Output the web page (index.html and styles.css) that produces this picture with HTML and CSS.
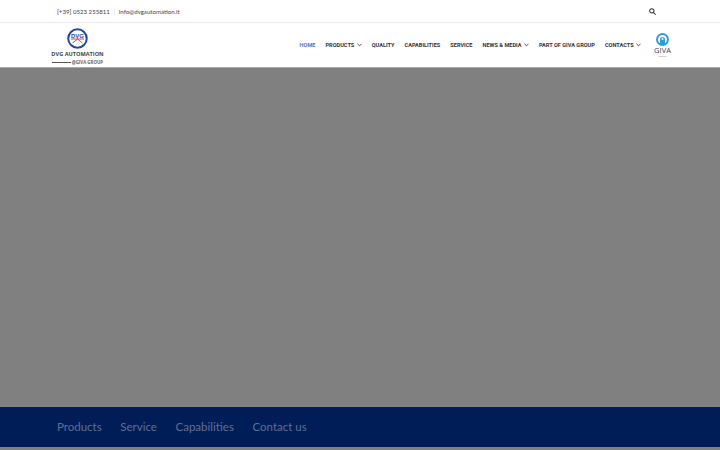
FILE: index.html
```html
<!DOCTYPE html>
<html lang="en">
<head>
    <meta charset="UTF-8">
    <meta name="viewport" content="width=device-width, initial-scale=1.0">
    <title>DVG Automation</title>
    <link rel="stylesheet" href="styles.css">
</head>
<body>

<div class="topbar">
    <div class="contacts">
        <span>[+39] 0523 255811</span>
        <span class="sep"></span>
        <span>info@dvgautomation.it</span>
    </div>
    <svg class="search" width="7" height="7" viewBox="0 0 16 16" fill="none" stroke="#333" stroke-width="2.4">
        <circle cx="6.5" cy="6.5" r="5"/>
        <path d="M10.5 10.5L15 15"/>
    </svg>
</div>

<header class="navbar">
    <div class="logo">
        <svg class="logo-mark" width="21" height="21" viewBox="0 0 42 42">
            <circle cx="21" cy="21" r="18.5" fill="#fff" stroke="#1f4a98" stroke-width="4"/>
            <path d="M8 22H34" stroke="#d8454a" stroke-width="2"/>
            <path d="M21 22L11 30M21 22L31 30" stroke="#d8454a" stroke-width="2"/>
            <text x="21" y="19" text-anchor="middle" class="logo-dvg">DVG</text>
        </svg>
        <div class="logo-name">DVG AUTOMATION</div>
        <div class="logo-sub"><span class="logo-line"></span><span class="logo-group">@GIVA GROUP</span></div>
    </div>
    <nav class="menu">
        <a class="active">HOME</a>
        <a>PRODUCTS <svg class="chev" width="5" height="4" viewBox="0 0 6 4"><path d="M.5.5L3 3 5.5.5" fill="none" stroke="#333" stroke-width="1"/></svg></a>
        <a>QUALITY</a>
        <a>CAPABILITIES</a>
        <a>SERVICE</a>
        <a>NEWS &amp; MEDIA <svg class="chev" width="5" height="4" viewBox="0 0 6 4"><path d="M.5.5L3 3 5.5.5" fill="none" stroke="#333" stroke-width="1"/></svg></a>
        <a>PART OF GIVA GROUP</a>
        <a>CONTACTS <svg class="chev" width="5" height="4" viewBox="0 0 6 4"><path d="M.5.5L3 3 5.5.5" fill="none" stroke="#333" stroke-width="1"/></svg></a>
    </nav>
    <div class="giva">
        <svg width="13" height="13" viewBox="0 0 26 26">
            <circle cx="13" cy="13" r="11" fill="#fff" stroke="#2a9fd6" stroke-width="4"/>
            <path d="M8 23V13a5 5 0 0 1 10 0v10z" fill="#2a9fd6"/>
            <circle cx="13" cy="12" r="2" fill="#fff"/>
        </svg>
        <div class="giva-name">GIVA</div>
        <div class="giva-sub">GROUP</div>
    </div>
</header>

<div class="hero"></div>

<div class="links">
    <a>Products</a>
    <a>Service</a>
    <a>Capabilities</a>
    <a>Contact us</a>
</div>

</body>
</html>
```

FILE: styles.css
```css
html, body {
    height: 100%;
}
body {
    font-family: "Open Sans", Arial, sans-serif;
    background-color: #808080;
    margin: 0;
    overflow: hidden;
}
.topbar {
    height: 22px;
    background-color: #fff;
    border-bottom: 1px solid #ececec;
    padding: 0 64px 0 57px;
    display: flex;
    align-items: center;
    justify-content: space-between;
}
.contacts {
    display: flex;
    align-items: center;
    gap: 4px;
    font-family: Lato, Arial, sans-serif;
    font-size: 6.1px;
    color: #444;
}
.sep {
    width: 1px;
    height: 9px;
    background-color: #eee;
}
.search {
    display: block;
}
.navbar {
    height: 44px;
    background-color: #fff;
    border-bottom: 1px solid #aaa;
    padding: 0 49px 0 52px;
    display: flex;
    align-items: center;
    justify-content: space-between;
}
.logo {
    width: 51px;
    display: flex;
    flex-direction: column;
    align-items: center;
    padding-top: 3px;
}
.logo-mark {
    display: block;
    margin-bottom: 1px;
}
.logo-dvg {
    font-family: "Liberation Sans", Arial, sans-serif;
    font-size: 12px;
    font-weight: 700;
    fill: #1f4a98;
}
.logo-name {
    font-size: 5.6px;
    font-weight: 700;
    line-height: 8px;
    color: #444;
    white-space: nowrap;
}
.logo-sub {
    display: flex;
    align-items: center;
    width: 100%;
    gap: 1px;
    margin-top: 1px;
}
.logo-line {
    flex: 1;
    height: 1px;
    background-color: #555;
}
.logo-group {
    font-size: 4.4px;
    font-weight: 700;
    line-height: 6px;
    color: #666;
    white-space: nowrap;
}
.menu {
    margin-left: auto;
    margin-right: 13px;
    display: flex;
    align-items: center;
    gap: 10px;
}
.menu a {
    font-family: Roboto, Arial, sans-serif;
    font-size: 5.6px;
    font-weight: 700;
    color: #333;
    white-space: nowrap;
}
.menu a.active {
    color: #4a74c9;
}
.chev {
    margin-left: 1px;
    vertical-align: 0;
}
.giva {
    width: 17px;
    display: flex;
    flex-direction: column;
    align-items: center;
}
.giva svg {
    display: block;
}
.giva-name {
    font-size: 7.5px;
    line-height: 9px;
    color: #444;
}
.giva-sub {
    font-size: 2.5px;
    line-height: 3px;
    color: #888;
}
.hero {
    height: 339px;
    background-color: #808080;
}
.links {
    height: 40px;
    background-color: #011d58;
    padding: 0 0 1px 57px;
    box-sizing: border-box;
    display: flex;
    align-items: center;
    gap: 18.6px;
}
.links a {
    font-family: Lato, Arial, sans-serif;
    font-size: 11.5px;
    color: #5f6f93;
}
```
